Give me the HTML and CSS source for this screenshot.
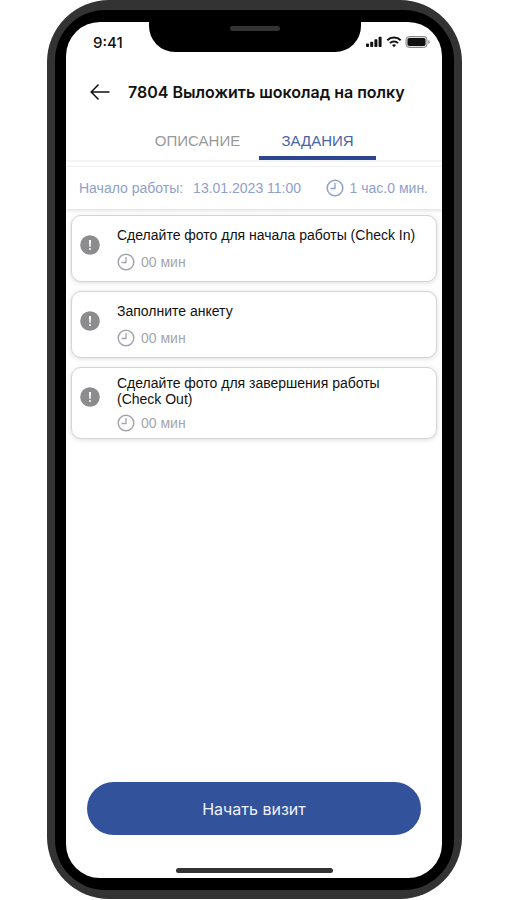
FILE: index.html
```html
<!DOCTYPE html>
<html lang="ru">
<head>
<meta charset="utf-8">
<meta name="viewport" content="width=device-width, initial-scale=1">
<title>7804 Выложить шоколад на полку</title>
<link rel="stylesheet" href="styles.css">
</head>
<body>
<svg class="symbols" aria-hidden="true">
  <symbol id="clock" viewBox="0 0 18 18"><circle cx="9" cy="9" r="7.800" fill="none" stroke="currentColor" stroke-width="1.500"/><path d="M9 4V9.500H4.500" fill="none" stroke="currentColor" stroke-width="1.300"/></symbol>
  <symbol id="alert" viewBox="0 0 20 20"><circle cx="10" cy="10" r="9.800" fill="#8c8c8e"/><path d="M9 5h2l-.3 6.800H9.300z" fill="#fff"/><circle cx="10" cy="14" r="1" fill="#fff"/></symbol>
</svg>
<div class="phone">
  <div class="bezel">
    <div class="notch"><span class="speaker"></span></div>
    <div class="screen">
      <div class="status">
        <span>9:41</span>
        <svg width="64" height="14" viewBox="0 0 64 14" aria-hidden="true">
          <g fill="#111"><rect x="0" y="8.500" width="3" height="3.500" rx=".8"/><rect x="4.200" y="6.800" width="3" height="5.200" rx=".8"/><rect x="8.400" y="4.300" width="3" height="7.700" rx=".8"/><rect x="12.600" y="1.800" width="3" height="10.200" rx=".8"/></g>
          <g fill="none" stroke="#111" stroke-width="2"><path d="M21.300 5.200a9.500 9.500 0 0 1 13.400 0"/><path d="M24 8.100a5.600 5.600 0 0 1 8 0"/></g>
          <path d="M28 12.300l-2-2.200a3 3 0 0 1 4 0z" fill="#111"/>
          <rect x="40" y="1.500" width="21" height="11" rx="3.200" fill="#ddd" stroke="#888"/>
          <rect x="41.500" y="3" width="18" height="8" rx="1.800" fill="#111"/>
          <path d="M62.300 5v4q1.500-.7 1.500-2t-1.500-2z" fill="#888"/>
        </svg>
      </div>
      <header class="header">
        <button class="back" type="button" aria-label="Назад"><svg width="20" height="18" viewBox="0 0 20 18"><path d="M19.500 9H1.500M8.500 1.500L1.200 9l7.300 7.500" fill="none" stroke="#111" stroke-width="1.500"/></svg></button>
        <h1>7804 Выложить шоколад на полку</h1>
      </header>
      <nav class="tabs">
        <a href="#description">ОПИСАНИЕ</a>
        <a class="active" href="#tasks" aria-current="page">ЗАДАНИЯ</a>
      </nav>
      <div class="info">
        <span>Начало работы:</span>
        <time datetime="2023-01-13T11:00">13.01.2023 11:00</time>
        <span class="duration"><svg class="clock"><use href="#clock"/></svg>1 час.0 мин.</span>
      </div>
      <main class="tasks" id="tasks">
        <article class="card">
          <svg class="alert"><use href="#alert"/></svg>
          <div class="details"><h2>Сделайте фото для начала работы (Check In)</h2><p><svg class="clock"><use href="#clock"/></svg>00 мин</p></div>
        </article>
        <article class="card">
          <svg class="alert"><use href="#alert"/></svg>
          <div class="details"><h2>Заполните анкету</h2><p><svg class="clock"><use href="#clock"/></svg>00 мин</p></div>
        </article>
        <article class="card compact">
          <svg class="alert"><use href="#alert"/></svg>
          <div class="details"><h2>Сделайте фото для завершения работы (Check Out)</h2><p><svg class="clock"><use href="#clock"/></svg>00 мин</p></div>
        </article>
      </main>
      <footer class="footer">
        <button class="start" type="button">Начать визит</button>
        <span class="home"></span>
      </footer>
    </div>
  </div>
</div>
</body>
</html>
```
FILE: styles.css
```css
* { box-sizing: border-box; }
body {
  margin: 0;
  padding: 0 45px 1px 47px;
  background: #fff;
  font-family: "Liberation Sans", Arial, sans-serif;
}
h1, h2, p { margin: 0; }
.symbols { position: absolute; width: 0; height: 0; }
.phone {
  display: flex;
  min-height: calc(100vh - 1px);
  padding: 10px 8px 9px;
  border-radius: 62px;
  background: #333;
}
.bezel {
  position: relative;
  display: flex;
  flex: 1;
  padding: 12px 12px 12px 11px;
  border-radius: 50px;
  background: #000;
}
.notch {
  position: absolute;
  z-index: 1;
  top: 10px;
  left: 50%;
  width: 212px;
  height: 32px;
  padding-top: 6px;
  transform: translateX(-50%);
  border-radius: 0 0 26px 26px;
  background: #000;
}
.speaker {
  display: block;
  width: 50px;
  height: 5px;
  margin: 0 auto;
  border-radius: 3px;
  background: #333;
}
.screen {
  display: flex;
  flex: 1;
  flex-direction: column;
  min-width: 0;
  overflow: hidden;
  border-radius: 34px;
  background: #fff;
}
.status {
  display: flex;
  align-items: center;
  justify-content: space-between;
  height: 40px;
  padding: 0 12px 0 27px;
  color: #111;
  font: 500 15px "Inter", sans-serif;
}
.header {
  display: flex;
  align-items: center;
  gap: 18px;
  height: 60px;
  padding: 0 24px;
}
.back {
  display: flex;
  padding: 0;
  border: 0;
  background: none;
}
h1 {
  color: #111;
  font: 600 16px "Inter", sans-serif;
  white-space: nowrap;
}
.tabs {
  display: flex;
  gap: 3px;
  justify-content: center;
  height: 40px;
  padding-left: 7px;
  border-bottom: 2px solid #f3f3f3;
}
.tabs a {
  width: 117px;
  height: 38px;
  padding-top: 10px;
  border-bottom: 4px solid transparent;
  color: #999;
  font-size: 15px;
  line-height: 18px;
  text-align: center;
  text-decoration: none;
}
.tabs .active { border-color: #2c4691; color: #4963a8; }
.info {
  display: flex;
  align-items: center;
  gap: 10px;
  height: 43px;
  margin-top: 4px;
  padding: 0 14px 0 13px;
  border-top: 1px solid #eee;
  box-shadow: 0 2px 3px #e4e4e4;
  color: #8fa0ca;
  font-size: 14px;
  line-height: 16px;
  white-space: nowrap;
}
.duration { display: flex; align-items: center; gap: 6px; margin-left: auto; }
.clock { flex: none; width: 18px; height: 18px; }
.tasks {
  display: grid;
  gap: 9px;
  padding: 6px 5px;
}
.card {
  display: flex;
  align-items: center;
  min-height: 67px;
  padding: 0 16px 0 7px;
  border: 1px solid #d4d4d4;
  border-radius: 10px;
  background: #fff;
  box-shadow: 0 1px 5px #ddd;
}
.alert { flex: none; width: 20px; height: 20px; margin: 0 17px 8px 1px; }
.details { display: grid; gap: 10px; }
h2 { color: #111; font-size: 14px; font-weight: 400; line-height: 16px; }
.details p {
  display: flex;
  align-items: center;
  gap: 6px;
  color: #a4a5aa;
  font-size: 14px;
  line-height: 18px;
}
.compact { min-height: 72px; }
.compact .details { gap: 7px; }
.compact .alert { margin-bottom: 12px; }
.footer {
  display: flex;
  flex-direction: column;
  gap: 33px;
  align-items: center;
  margin-top: auto;
  padding: 0 21px 5px;
}
.start {
  width: 100%;
  height: 53px;
  border: 0;
  border-radius: 27px;
  background: #33529c;
  color: #eef2ff;
  font: 400 16px "Inter", sans-serif;
}
.home { width: 157px; height: 5px; border-radius: 3px; background: #333; }
```
